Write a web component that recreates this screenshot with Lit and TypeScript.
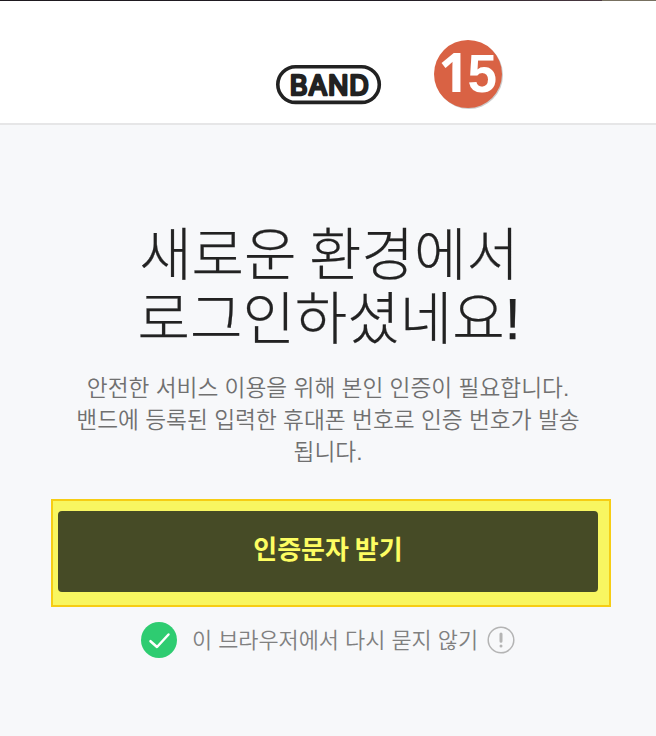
import { LitElement, html, css } from "lit";
import { customElement } from "lit/decorators.js";

@customElement("app-root")
class AppRoot extends LitElement {
  static styles = css`
    :host { display: block; height: 736px; overflow: hidden; background: #f7f8fa; font-family: "Liberation Sans", "Noto Sans CJK KR", sans-serif; color: #222; }
    * { box-sizing: border-box; }
    .strip { height: 1px; background: linear-gradient(90deg, #1e191f 0, #211c24 60%, #4a3840 602px, #777060 602px); }
    .header { position: relative; height: 124px; background: #fff; border-bottom: 2px solid #e6e6e7; }
    .logo { position: absolute; left: 275px; top: 63px; display: block; }
    .badge { position: absolute; left: 433px; top: 38px; display: block; overflow: visible; }
    .main { display: flex; flex-direction: column; align-items: center; padding-top: 93px; }
    .title { margin: 0 0 0 2px; text-align: center; font-weight: 300; font-size: 57px; line-height: 64px; white-space: nowrap; font-family: "Noto Sans CJK KR", sans-serif; -webkit-text-stroke: .25px #222; }
    .mark { font-family: "Liberation Sans", sans-serif; line-height: 1; }
    .desc { margin: 24px 0 0; text-align: center; font-size: 22.7px; line-height: 32px; color: #707070; font-weight: 350; white-space: nowrap; }
    .highlight { margin: 31px 0 0 6px; width: 560px; height: 108px; border: 2px solid #f6cd14; background: #f8f661; padding: 10px 11px 13px 5px; }
    .button { display: block; width: 540px; height: 81px; border: 0; border-radius: 4px; background: #464b26; color: #fdfd62; font: 700 26px "Noto Sans CJK KR", sans-serif; padding: 0 0 8px; }
    .remember { display: flex; align-items: center; height: 36px; margin-top: 15px; font-size: 21.9px; color: #808080; font-weight: 350; }
    .label { margin: 0 9px 3px 15px; white-space: nowrap; }
  `;
  render() {
    return html`
      <div class="strip"></div>
      <header class="header">
        <svg class="logo" width="107" height="42" viewBox="0 0 107 42">
          <rect x="2.8" y="2.8" width="101.5" height="35.6" rx="17.8" fill="#fff" stroke="#222" stroke-width="3.6"/>
          <text x="14.8" y="30.8" textLength="80" lengthAdjust="spacingAndGlyphs" font-family="Inter" font-weight="400" letter-spacing=".8" font-size="26.5" fill="#222" stroke="#222" stroke-width="2.5" stroke-linejoin="round">BAND</text>
        </svg>
        <svg class="badge" width="72" height="72" viewBox="0 0 72 72">
          <circle cx="36" cy="36" r="34" fill="#ccc"/><circle cx="35" cy="35" r="34" fill="#d96244"/>
          <text y="52.7" font-family="Liberation Sans" font-weight="700" fill="#fff"><tspan x="5.5" font-family="Open Sans" font-size="53">1</tspan><tspan x="34.5" font-size="53">5</tspan></text>
        </svg>
      </header>
      <main class="main">
        <h1 class="title">새로운 환경에서<br>로그인하셨네요<span class="mark">!</span></h1>
        <p class="desc">안전한 서비스 이용을 위해 본인 인증이 필요합니다.<br>밴드에 등록된 입력한 휴대폰 번호로 인증 번호가 발송<br>됩니다.</p>
        <div class="highlight"><button class="button">인증문자 받기</button></div>
        <div class="remember">
          <svg width="36" height="36" viewBox="0 0 36 36"><circle cx="18" cy="18" r="18" fill="#2ecc71"/><path d="M9.5 19.2l6.5 5.8L27.5 12.5" fill="none" stroke="#fff" stroke-width="2.5" stroke-linecap="round" stroke-linejoin="round"/></svg>
          <span class="label">이 브라우저에서 다시 묻지 않기</span>
          <svg width="28" height="28" viewBox="0 0 28 28" fill="none" stroke="#b4b4b4" stroke-linecap="round"><circle cx="14" cy="14" r="12.8" stroke-width="1.5"/><path d="M14 8v7.2M14 20v.1" stroke-width="3"/></svg>
        </div>
      </main>`;
  }
}
